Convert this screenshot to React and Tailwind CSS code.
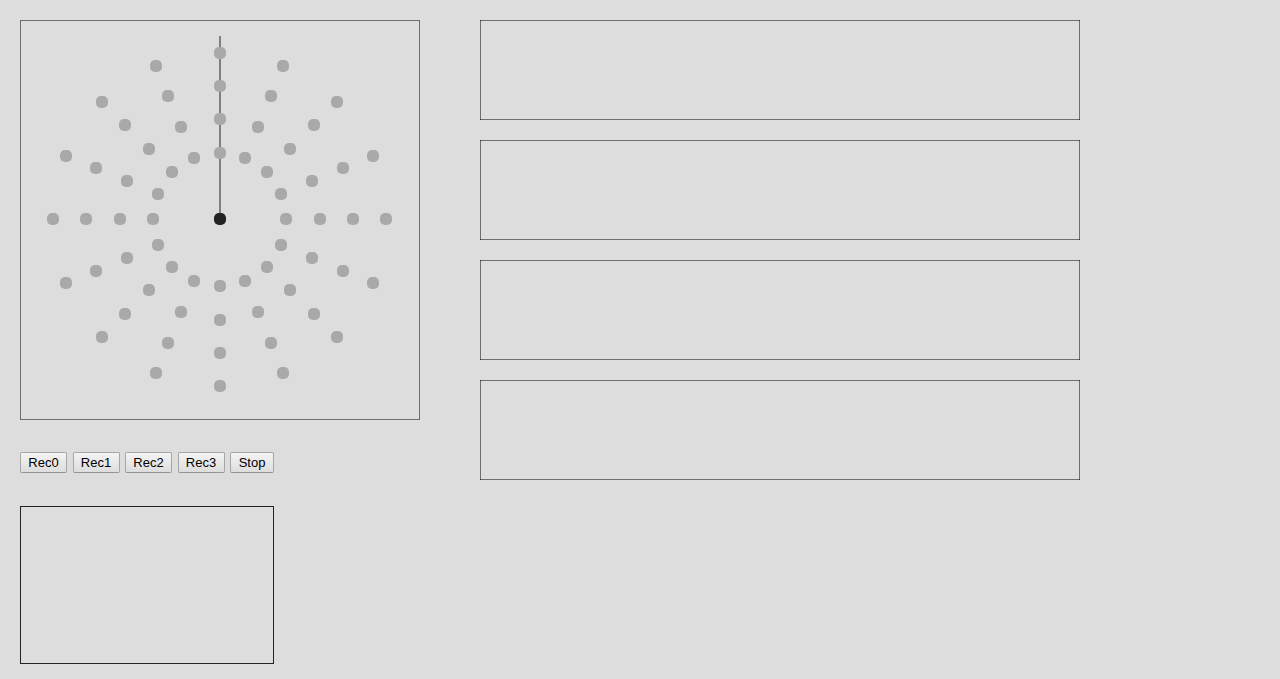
const CENTER = 200;
const SPOKES = Array.from({ length: 16 }, (_, i) => (i * Math.PI) / 8);
const RINGS = [2, 3, 4, 5].map((n) => (n * CENTER) / 6);

const DOTS = RINGS.flatMap((radius) =>
  SPOKES.map((angle) => {
    const bias = Math.cos(angle) < -0.5 ? 0.0001 : -0.0001;
    return {
      x: Math.floor(CENTER + radius * Math.sin(angle) + 0.0001),
      y: Math.floor(CENTER - radius * Math.cos(angle) + bias),
    };
  })
);

const BUTTONS = [
  { label: 'Rec0', width: 'w-[47px]' },
  { label: 'Rec1', width: 'w-[47px]' },
  { label: 'Rec2', width: 'w-[47px]' },
  { label: 'Rec3', width: 'w-[47px]' },
  { label: 'Stop', width: 'w-[44px]' },
];

function Dot({ x, y, className }) {
  return <rect x={x - 6} y={y - 6} width="12" height="12" rx="5" className={className} />;
}

function Dial() {
  return (
    <svg viewBox="0 0 400 400" className="block size-[400px]" role="img" aria-label="Sequencer dial">
      <rect x="0.5" y="0.5" width="399" height="399" fill="none" className="stroke-[#6e6e6e]" />
      <rect x="199" y="16" width="2" height="184" className="fill-[#808080]" />
      {DOTS.map(({ x, y }, i) => (
        <Dot key={i} x={x} y={y} className="fill-[#a9a9a9]" />
      ))}
      <Dot x={200} y={199} className="fill-[#222222]" />
    </svg>
  );
}

function Track() {
  return (
    <div className="relative h-[100px] border-x border-[#000000]/50 after:absolute after:inset-y-0 after:-inset-x-px after:border-y after:border-[#000000]/50" />
  );
}

export default function App() {
  return (
    <main className="flex min-h-screen gap-[60px] bg-[#dddddd] px-5 pt-5 font-['Liberation_Sans',Arial,sans-serif]">
      <section className="w-[400px] shrink-0">
        <Dial />
        <div className="w-[254px] pt-8">
          <div className="flex justify-between">
            {BUTTONS.map(({ label, width }) => (
              <button
                key={label}
                type="button"
                className={`${width} h-[21px] rounded-xs border border-[#a6a6a6] border-b-[#949494] bg-linear-to-b from-[#f4f4f4] to-[#dddddd] text-center text-[13px] leading-[19px] text-black`}
              >
                {label}
              </button>
            ))}
          </div>
          <div className="mt-[33px] h-[158px] border border-[#222222]" />
        </div>
      </section>
      <section className="flex max-w-[600px] flex-1 flex-col gap-5">
        <Track />
        <Track />
        <Track />
        <Track />
      </section>
    </main>
  );
}
